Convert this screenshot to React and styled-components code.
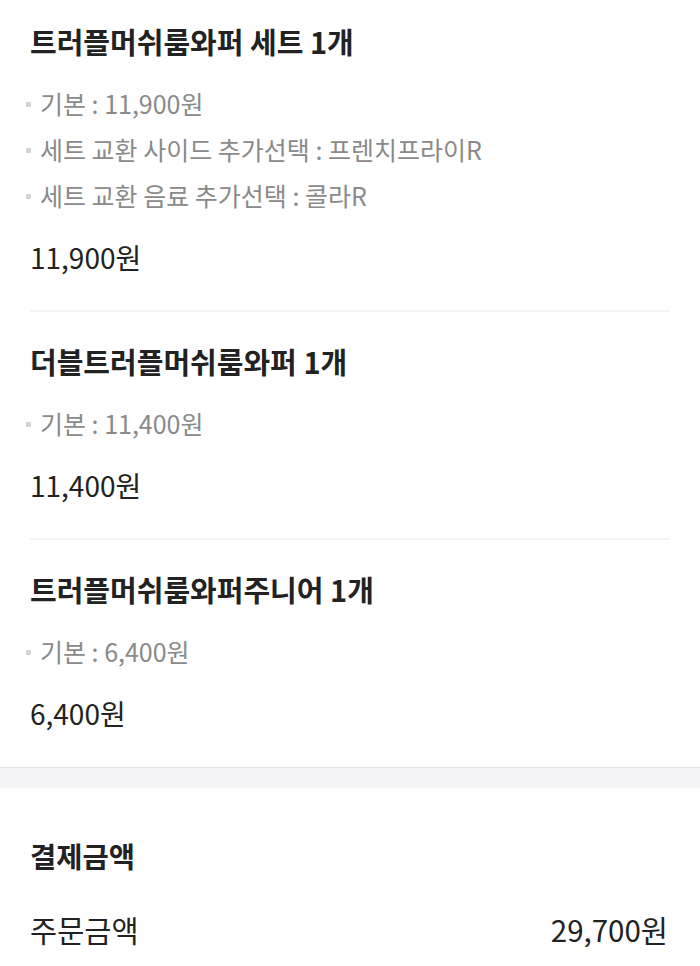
import React from "react";
import styled, { createGlobalStyle } from "styled-components";

const Global = createGlobalStyle`
  html, body { margin: 0; padding: 0; background: #fff; }
  body { font-family: "Noto Sans CJK KR", "Noto Sans", sans-serif; color: #222; }
`;

const Page = styled.div`
  width: 700px;
  background: #fff;
`;

const ItemList = styled.div`
  padding: 0 30px;
`;

const Item = styled.div`
  padding: ${(p) => (p.$first ? "23px" : "31px")} 0 ${(p) => (p.$last ? "36px" : "35px")};
  border-bottom: ${(p) => (p.$last ? "none" : "2px solid #f4f4f4")};
`;

const Title = styled.div`
  font-size: 29px;
  line-height: 36px;
  font-weight: 700;
  color: #222;
`;

const Options = styled.ul`
  list-style: none;
  margin: 21px 0 0;
  padding: 0;
`;

const Option = styled.li`
  display: flex;
  align-items: center;
  font-size: 25px;
  line-height: 46px;
  color: #8a8a8a;
  white-space: pre;
  &::before {
    content: "";
    width: 5px;
    height: 5px;
    border-radius: 1px;
    background: #d4d4d4;
    margin: 3px 9px 0 -4px;
    flex: none;
  }
`;

const Price = styled.div`
  margin-top: 21px;
  font-size: 28px;
  line-height: 36px;
  color: #222;
`;

const Band = styled.div`
  height: 20px;
  background: #f4f4f6;
  border-top: 1px solid #e4e4e4;
`;

const Summary = styled.div`
  padding: 50px 32px 0 30px;
`;

const SummaryTitle = styled.div`
  font-size: 28.5px;
  line-height: 36px;
  font-weight: 700;
  color: #222;
`;

const Row = styled.div`
  display: flex;
  justify-content: space-between;
  align-items: center;
  margin-top: 37px;
  font-size: 29.5px;
  line-height: 36px;
  color: #222;
`;

const items = [
  {
    title: "트러플머쉬룸와퍼 세트 1개",
    options: [
      "기본 : 11,900원",
      "세트 교환 사이드 추가선택 : 프렌치프라이R",
      "세트 교환 음료 추가선택 : 콜라R",
    ],
    price: "11,900원",
  },
  {
    title: "더블트러플머쉬룸와퍼 1개",
    options: ["기본 : 11,400원"],
    price: "11,400원",
  },
  {
    title: "트러플머쉬룸와퍼주니어 1개",
    options: ["기본 : 6,400원"],
    price: "6,400원",
  },
];

export default function App() {
  return (
    <Page>
      <Global />
      <ItemList>
        {items.map((it, i) => (
          <Item key={i} $first={i === 0} $last={i === items.length - 1}>
            <Title>{it.title}</Title>
            <Options>
              {it.options.map((o, j) => (
                <Option key={j}>{o}</Option>
              ))}
            </Options>
            <Price>{it.price}</Price>
          </Item>
        ))}
      </ItemList>
      <Band />
      <Summary>
        <SummaryTitle>결제금액</SummaryTitle>
        <Row>
          <span>주문금액</span>
          <span>29,700원</span>
        </Row>
      </Summary>
    </Page>
  );
}
